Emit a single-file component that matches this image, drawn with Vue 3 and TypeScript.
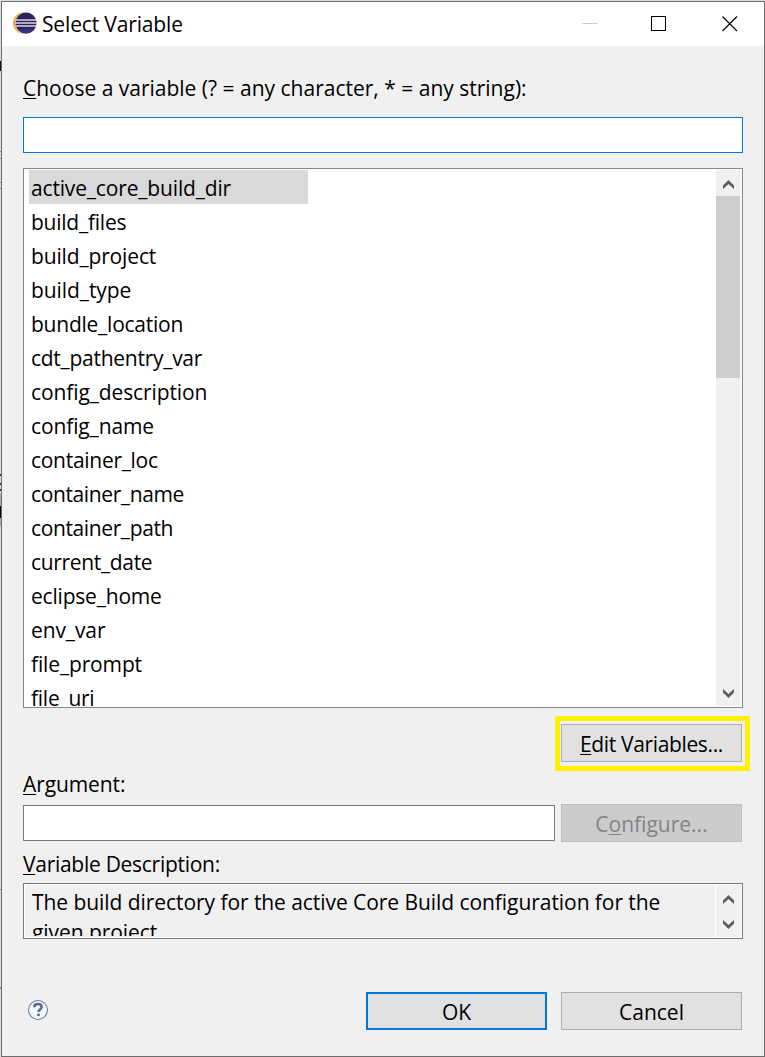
<script setup lang="ts">
interface Variable {
  name: string
  spacing: number
}

const variables: Variable[] = [
  { name: 'active_core_build_dir', spacing: -0.16 },
  { name: 'build_files', spacing: -0.24 },
  { name: 'build_project', spacing: -0.15 },
  { name: 'build_type', spacing: -0.08 },
  { name: 'bundle_location', spacing: -0.24 },
  { name: 'cdt_pathentry_var', spacing: -0.27 },
  { name: 'config_description', spacing: -0.11 },
  { name: 'config_name', spacing: -0.12 },
  { name: 'container_loc', spacing: -0.29 },
  { name: 'container_name', spacing: -0.38 },
  { name: 'container_path', spacing: -0.38 },
  { name: 'current_date', spacing: -0.33 },
  { name: 'eclipse_home', spacing: -0.2 },
  { name: 'env_var', spacing: -0.1 },
  { name: 'file_prompt', spacing: -0.14 },
  { name: 'file_uri', spacing: -0.25 },
]
const selected = 'active_core_build_dir'
</script>

<template>
  <div class="desktop">
    <div class="window">
      <header class="titlebar">
        <svg class="logo" width="26" height="24" viewBox="0 0 26 24">
          <circle cx="12" cy="12" r="11" fill="#f5a340" />
          <circle cx="14.2" cy="12" r="11.2" fill="#fff" />
          <circle cx="14" cy="12" r="10.6" fill="#2c2255" />
          <path d="M5.5 18h17a10.6 10.6 0 0 1-17 0z" fill="#3b2c7c" />
          <path d="M3.5 9h21M3 12h22M3.5 15h21" stroke="#d9d5ea" stroke-width="1.5" />
        </svg>
        <span class="title">Select Variable</span>
        <svg class="controls" width="175" height="44" viewBox="0 0 175 44" fill="none">
          <path d="M.5 21.5h15" stroke="#ccc" />
          <rect x="69.5" y="14.5" width="14" height="14" stroke="#000" />
          <path d="M140.5 14.5l14.500 14.500M155 14.500l-14.500 14.500" stroke="#000" stroke-width="1.15" />
        </svg>
      </header>

      <main class="content">
        <label class="label choose"><u>C</u>hoose a variable (? = any character, * = any string):</label>
        <div class="field filter"></div>

        <div class="list">
          <ul class="rows">
            <li
              v-for="v in variables"
              :key="v.name"
              class="row"
              :class="{ selected: v.name === selected }"
            ><span :style="{ letterSpacing: v.spacing + 'px' }">{{ v.name }}</span></li>
          </ul>
          <div class="scrollbar">
            <svg class="chev" width="11" height="9" viewBox="0 0 11 9"><path d="M5.500 0L11 5.400V9L5.500 3.900 0 9V5.400z" /></svg>
            <div class="thumb"></div>
            <svg class="chev down" width="11" height="9" viewBox="0 0 11 9"><path d="M5.500 9L11 3.600V0L5.500 5.100 0 0V3.600z" /></svg>
          </div>
        </div>

        <div class="edit-line">
          <div class="highlight"><button class="btn"><span class="t-edit"><u>E</u>dit Variables...</span></button></div>
        </div>

        <label class="label argument"><u>A</u>rgument:</label>
        <div class="arg-line">
          <div class="field arg"></div>
          <button class="btn disabled"><span>C<u>o</u>nfigure...</span></button>
        </div>

        <label class="label vardesc"><u>V</u>ariable Description:</label>
        <div class="desc">
          <div class="desc-text">The build directory for the active Core Build configuration for the<br />given project.</div>
          <div class="desc-scroll">
            <svg class="chev" width="11" height="9" viewBox="0 0 11 9"><path d="M5.500 0L11 5.400V9L5.500 3.900 0 9V5.400z" /></svg>
            <svg class="chev" width="11" height="9" viewBox="0 0 11 9"><path d="M5.500 9L11 3.600V0L5.500 5.100 0 0V3.600z" /></svg>
          </div>
        </div>

        <footer class="footer">
          <svg class="help" width="22" height="22" viewBox="0 0 22 22" fill="none">
            <circle cx="11" cy="11" r="9.500" fill="#f5f6f8" stroke="#6f7f9f" stroke-width="1.100" />
            <path d="M7.300 8.200C7.300 5.900 8.800 5 11.100 5c2.100 0 3.500 1.100 3.500 2.900 0 2.500-3.200 2.600-3.200 5.200" stroke="#566a93" stroke-width="2.500" />
            <path d="M10.100 14.600h2.700v2.500h-2.700z" fill="#566a93" />
          </svg>
          <button class="btn ok"><span>OK</span></button>
          <button class="btn"><span>Cancel</span></button>
        </footer>
      </main>
    </div>
  </div>
</template>

<style>
html,
body {
  margin: 0;
  overflow: hidden;
}
</style>

<style scoped>
* {
  box-sizing: border-box;
}
.desktop {
  width: 765px;
  height: 1057px;
  padding: 1px 0 0 1px;
  background:
    linear-gradient(#111, #111) 0 61px / 1px 10px no-repeat,
    linear-gradient(#888, #888) 0 151px / 1px 1px no-repeat,
    linear-gradient(#888, #888) 0 158px / 1px 1px no-repeat,
    linear-gradient(#888, #888) 0 182px / 1px 1px no-repeat,
    linear-gradient(#888, #888) 0 188px / 1px 1px no-repeat,
    linear-gradient(#333, #333) 0 474px / 1px 2px no-repeat,
    linear-gradient(#333, #333) 0 483px / 1px 2px no-repeat,
    linear-gradient(#333, #333) 0 489px / 1px 2px no-repeat,
    linear-gradient(#000, #000) 0 506px / 1px 12px no-repeat,
    linear-gradient(#aaa, #aaa) 0 494px / 1px 32px no-repeat,
    linear-gradient(#888, #888) 0 889px / 1px 1px no-repeat,
    linear-gradient(#888, #888) 0 987px / 1px 2px no-repeat,
    #dcdcdc;
  font-family: 'Open Sans', 'Noto Sans', sans-serif;
  font-size: 21px;
  color: #000;
}
.window {
  width: 764px;
  height: 1056px;
  border: 1px solid #6d6d6d;
  background: #f0f0f0;
}
.titlebar {
  height: 44px;
  display: flex;
  align-items: center;
  background: #fff;
}
.logo {
  margin: 0 4px 2px 10px;
}
.title {
  flex: 1;
  height: 44px;
  line-height: 45px;
  letter-spacing: -0.15px;
  white-space: nowrap;
}
.controls {
  margin-right: 7px;
}
.content {
  padding: 0 21px;
  display: flex;
  flex-direction: column;
}
.label {
  display: block;
  height: 30px;
  line-height: 30px;
  white-space: nowrap;
}
u {
  text-decoration: underline;
  text-decoration-thickness: 1px;
  text-underline-offset: 2px;
  text-decoration-skip-ink: none;
}
.choose {
  margin-top: 27px;
}
.field {
  height: 36px;
  background: #fff;
  border: 1px solid #7a7a7a;
}
.filter {
  margin-top: 14px;
  border-color: #0078d7;
}
.list {
  margin-top: 15px;
  height: 540px;
  border: 1px solid #828790;
  background: #fff;
  padding: 1px;
  display: flex;
  justify-content: space-between;
}
.rows {
  list-style: none;
  margin: 0;
  padding: 0 0 0 4px;
  height: 537px;
  overflow: hidden;
}
.row {
  width: 279px;
  height: 34px;
  line-height: 36px;
  padding-left: 2px;
  white-space: nowrap;
}
.selected {
  background: #d9d9d9;
}
.scrollbar {
  width: 25px;
  height: 536px;
  background: #f0f0f0;
  display: flex;
  flex-direction: column;
}
.chev {
  display: block;
  margin: 10px 0 7px 7px;
  fill: #5c5c5c;
}
.thumb {
  width: 24px;
  height: 182px;
  background: #cdcdcd;
}
.chev.down {
  margin: auto 0 8px 7px;
}
.edit-line {
  display: flex;
  justify-content: flex-end;
  margin: 8px -7px 0 0;
}
.highlight {
  width: 195px;
  height: 55px;
  border: 5px solid #fff200;
  padding: 3px 1px;
}
.btn {
  display: block;
  width: 181px;
  height: 38px;
  padding: 2px 0 0;
  border: 1px solid #adadad;
  background: #e1e1e1;
  color: #000;
  font: inherit;
  line-height: 34px;
  text-align: center;
}
.t-edit {
  letter-spacing: -0.35px;
}
.disabled {
  background: #ccc;
  border-color: #bfbfbf;
  color: #838383;
}
.argument {
  margin-top: -1px;
  line-height: 29px;
  letter-spacing: -0.1px;
}
.arg-line {
  margin: 4px 0 0;
  display: flex;
  align-items: center;
  gap: 6px;
}
.arg {
  width: 532px;
}
.vardesc {
  margin-top: 8px;
  line-height: 29px;
  letter-spacing: -0.28px;
}
.desc {
  margin-top: 3px;
  height: 56px;
  border: 1px solid #7a7a7a;
  padding: 1px;
  box-shadow: inset 0 0 0 1px #fff;
  display: flex;
}
.desc-text {
  width: 690px;
  height: 51px;
  overflow: hidden;
  padding: 2px 0 0 7px;
  line-height: 30px;
  letter-spacing: -0.06px;
  white-space: nowrap;
}
.desc-scroll {
  width: 26px;
  border-left: 1px solid #fff;
}
.desc-scroll .chev {
  margin: 10px 0 0 7px;
}
.desc-scroll .chev + .chev {
  margin-top: 16px;
}
.footer {
  margin: 53px 1px 0 0;
  display: flex;
  gap: 14px;
}
.help {
  margin: 7px auto 0 4px;
}
.ok {
  border: 2px solid #0078d7;
  line-height: 32px;
}
</style>
